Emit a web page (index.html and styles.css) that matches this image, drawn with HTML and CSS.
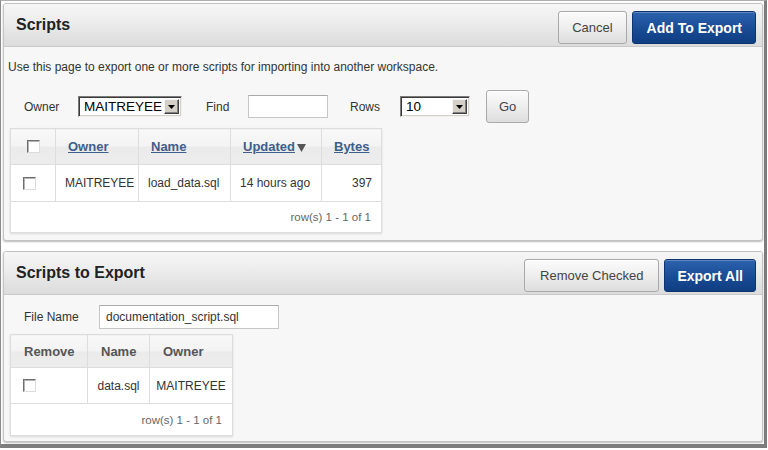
FILE: index.html
```html
<!DOCTYPE html>
<html lang="en">
<head>
<meta charset="utf-8">
<title>Export Scripts</title>
<link rel="stylesheet" href="styles.css">
</head>
<body>
<div class="frame">
  <section class="region">
    <div class="region-header">
      <h2 class="region-title">Scripts</h2>
      <div class="region-buttons">
        <button class="btn">Cancel</button>
        <button class="btn btn-hot">Add To Export</button>
      </div>
    </div>
    <div class="region-body body-scripts">
      <p class="intro">Use this page to export one or more scripts for importing into another workspace.</p>
      <div class="search-row">
        <label class="lbl lbl-owner">Owner</label>
        <div class="select sel-owner">
          <span class="select-text">MAITREYEE</span>
          <span class="select-arrow"><svg width="7" height="4" viewBox="0 0 7 4"><path d="M0 0h7L3.5 4z" fill="#000"/></svg></span>
        </div>
        <label class="lbl lbl-find">Find</label>
        <div class="input input-find"></div>
        <label class="lbl lbl-rows">Rows</label>
        <div class="select sel-rows">
          <span class="select-text">10</span>
          <span class="select-arrow"><svg width="7" height="4" viewBox="0 0 7 4"><path d="M0 0h7L3.5 4z" fill="#000"/></svg></span>
        </div>
        <button class="btn btn-go">Go</button>
      </div>
      <table class="report report-scripts">
        <colgroup>
          <col class="c-check"><col class="c-owner"><col class="c-name"><col class="c-updated"><col class="c-bytes">
        </colgroup>
        <thead>
          <tr>
            <th class="th-check"><input type="checkbox" class="cb"></th>
            <th><a class="sort-link">Owner</a></th>
            <th><a class="sort-link">Name</a></th>
            <th><a class="sort-link">Updated</a><svg class="sort-icon" width="9" height="8" viewBox="0 0 9 8"><path d="M0 0h9L4.5 8z" fill="#555"/></svg></th>
            <th><a class="sort-link">Bytes</a></th>
          </tr>
        </thead>
        <tbody>
          <tr class="data-row">
            <td class="td-check"><input type="checkbox" class="cb"></td>
            <td>MAITREYEE</td>
            <td>load_data.sql</td>
            <td>14 hours ago</td>
            <td class="num">397</td>
          </tr>
          <tr class="foot-row">
            <td colspan="5" class="pager">row(s) 1 - 1 of 1</td>
          </tr>
        </tbody>
      </table>
    </div>
  </section>

  <section class="region">
    <div class="region-header">
      <h2 class="region-title">Scripts to Export</h2>
      <div class="region-buttons">
        <button class="btn btn-wide">Remove Checked</button>
        <button class="btn btn-hot btn-export">Export All</button>
      </div>
    </div>
    <div class="region-body body-export">
      <div class="file-row">
        <label class="lbl lbl-file">File Name</label>
        <div class="input input-file">documentation_script.sql</div>
      </div>
      <table class="report report-export">
        <colgroup>
          <col class="c-remove"><col class="c-name2"><col class="c-owner2">
        </colgroup>
        <thead>
          <tr>
            <th>Remove</th>
            <th>Name</th>
            <th>Owner</th>
          </tr>
        </thead>
        <tbody>
          <tr class="data-row">
            <td class="td-check"><input type="checkbox" class="cb"></td>
            <td class="center">data.sql</td>
            <td class="center">MAITREYEE</td>
          </tr>
          <tr class="foot-row">
            <td colspan="3" class="pager">row(s) 1 - 1 of 1</td>
          </tr>
        </tbody>
      </table>
    </div>
  </section>
</div>
</body>
</html>
```

FILE: styles.css
```css
* { box-sizing: border-box; }

html, body {
  margin: 0;
  padding: 0;
  background: #ffffff;
}

body {
  font-family: "Liberation Sans", Arial, sans-serif;
  font-size: 12px;
  color: #333333;
}

.frame {
  width: 767px;
  height: 448px;
  border-style: solid;
  border-width: 1px 3px 4px 1px;
  border-color: #b0b0b0 #7d7d7d #7d7d7d #8a8a8a;
  padding: 2px 1px 0 2px;
  background: #ffffff;
}

/* Regions */
.region {
  background: #f7f7f7;
  border: 1px solid #c3c3c3;
  border-radius: 3px;
  box-shadow: 0 1px 2px rgba(0, 0, 0, 0.28);
  margin-bottom: 10px;
}

.region-header {
  height: 43px;
  display: flex;
  justify-content: space-between;
  align-items: flex-start;
  padding: 7px 6px 0 12px;
  border-bottom: 1px solid #c9c9c9;
  border-radius: 2px 2px 0 0;
  background: linear-gradient(#f6f6f6 0%, #ececec 45%, #e4e4e4 70%, #dcdcdc 100%);
}

.region-title {
  margin: 0;
  font-size: 16px;
  font-weight: bold;
  line-height: 28px;
  color: #222222;
}

.region-buttons {
  display: flex;
  gap: 5px;
}

/* Buttons */
.btn {
  height: 33px;
  padding: 0 13px;
  font-family: "Liberation Sans", Arial, sans-serif;
  font-size: 13px;
  color: #444444;
  border: 1px solid #a9a9a9;
  border-radius: 3px;
  background: linear-gradient(#fbfbfb 0%, #eeeeee 50%, #dddddd 100%);
  box-shadow: inset 0 1px 0 #ffffff;
}

.btn-wide {
  padding: 0 15px;
}

.btn-hot {
  padding: 0 13px 0 14px;
  font-size: 14px;
  font-weight: bold;
  color: #ffffff;
  border-color: #0b3470;
  background: linear-gradient(#2c62ad 0%, #1a4d96 50%, #0f3d82 100%);
  box-shadow: inset 0 1px 0 rgba(255, 255, 255, 0.25);
}

.btn-export {
  padding: 0 12px;
}

/* Body */
.region-body {
  padding: 12px 4px 7px;
}

.body-export {
  padding: 10px 4px 5px;
}

.intro {
  margin: 0;
  line-height: 16px;
  color: #333333;
}

.search-row {
  display: flex;
  align-items: center;
  height: 33px;
  margin: 15px 0 0 16px;
}

.file-row {
  display: flex;
  align-items: center;
  height: 24px;
  margin-left: 16px;
}

.lbl {
  font-size: 12px;
  color: #333333;
}

.lbl-owner { width: 54px; }
.lbl-find { width: 42px; margin-left: 24px; }
.lbl-rows { width: 50px; margin-left: 22px; }
.lbl-file { width: 75px; }

/* Classic select */
.select {
  display: flex;
  align-items: center;
  height: 21px;
  padding: 2px;
  background: #ffffff;
  border: 1px solid;
  border-color: #7b7b7b #f0f0f0 #f0f0f0 #7b7b7b;
  box-shadow: inset 1px 1px 0 #3a3a3a, inset -1px -1px 0 #d4d0c8;
}

.sel-owner { width: 104px; }
.sel-rows { width: 70px; }

.select-text {
  flex: 1;
  padding-left: 3px;
  font-size: 13.5px;
  line-height: 15px;
  color: #000000;
}

.select-arrow {
  width: 15px;
  height: 15px;
  display: flex;
  align-items: center;
  justify-content: center;
  background: #d4d0c8;
  border: 1px solid;
  border-color: #f4f4f4 #404040 #404040 #f4f4f4;
  box-shadow: inset -1px -1px 0 #808080;
}

.input {
  background: #ffffff;
  border: 1px solid #c6c6c6;
  border-top-color: #aaaaaa;
}

.input-find {
  width: 80px;
  height: 23px;
}

.input-file {
  width: 180px;
  height: 24px;
  padding-left: 6px;
  line-height: 22px;
  font-size: 12px;
  color: #333333;
}

.btn-go {
  margin-left: 16px;
  padding: 0 12px;
}

/* Report tables */
.report {
  border-collapse: collapse;
  table-layout: fixed;
  margin: 5px 0 0 2px;
  background: #ffffff;
  box-shadow: 0 1px 2px rgba(0, 0, 0, 0.12);
}

.report th,
.report td {
  border: 1px solid #dddddd;
  padding: 0;
}

.report th {
  height: 36px;
  padding: 0 12px;
  text-align: left;
  font-size: 13px;
  font-weight: bold;
  color: #555555;
  background: linear-gradient(#f8f8f8 0%, #f3f3f3 50%, #ebebeb 50%, #ececec 100%);
}

.report-scripts { width: 371px; }
.c-check { width: 45px; }
.c-owner { width: 83px; }
.c-name { width: 92px; }
.c-updated { width: 91px; }
.c-bytes { width: 60px; }

.report-export { width: 222px; }
.report-export th { height: 33px; padding: 0 13px; }
.c-remove { width: 77px; }
.c-name2 { width: 62px; }
.c-owner2 { width: 83px; }

.th-check .cb { margin: 0 auto; }

.sort-link {
  color: #3e5e8c;
  text-decoration: underline;
}

.sort-icon {
  margin-left: 2px;
  vertical-align: -1px;
}

.data-row td {
  height: 37px;
  padding: 0 9px;
  font-size: 12px;
  color: #333333;
}

.report-export .data-row td { height: 36px; padding: 0 4px; }

.report .data-row td.td-check { padding-left: 12px; }

.num { text-align: right; }
.center { text-align: center; }

.foot-row td.pager {
  height: 31px;
  padding-right: 10px;
  text-align: right;
  font-size: 11.5px;
  color: #666666;
}

.report-export .foot-row td.pager { height: 32px; }

/* Classic checkbox */
.cb {
  -webkit-appearance: none;
  appearance: none;
  display: block;
  width: 13px;
  height: 13px;
  margin: 0;
  background: #ffffff;
  border: 1px solid;
  border-color: #6e6e6e #dcdcdc #dcdcdc #6e6e6e;
  box-shadow: inset 1px 1px 0 #b4b4b4;
}
```
